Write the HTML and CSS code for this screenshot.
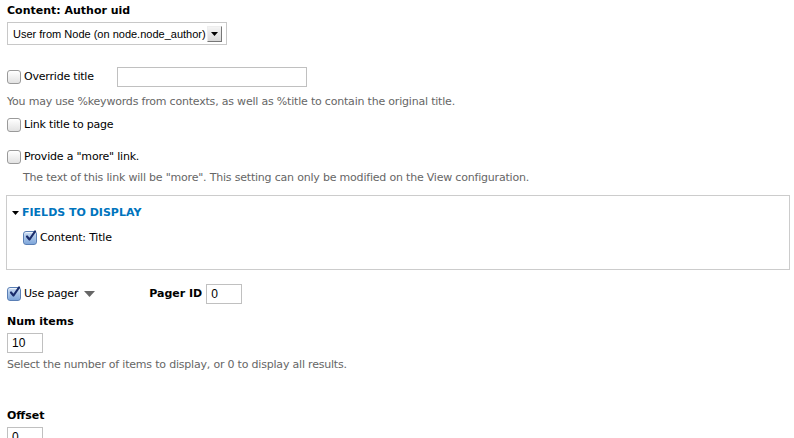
FILE: index.html
```html
<!DOCTYPE html>
<html>
<head>
<meta charset="utf-8">
<link rel="stylesheet" href="styles.css">
</head>
<body>
<div class="page">
  <div class="item item-select">
    <div class="label">Content: Author uid</div>
    <div class="select">
      <span class="select-text">User from Node (on node.node_author)</span>
      <span class="select-btn"><svg width="7" height="4" viewBox="0 0 7 4"><path d="M0 0H7L3.5 4Z" fill="#000"/></svg></span>
    </div>
  </div>

  <div class="item row override">
    <span class="cb"></span><span class="cb-label">Override title</span>
    <span class="text-input wide"></span>
  </div>
  <div class="help help-override">You may use %keywords from contexts, as well as %title to contain the original title.</div>

  <div class="item row link-title">
    <span class="cb"></span><span class="cb-label">Link title to page</span>
  </div>

  <div class="item row more">
    <span class="cb"></span><span class="cb-label">Provide a "more" link.</span>
  </div>
  <div class="help help-more">The text of this link will be "more". This setting can only be modified on the View configuration.</div>

  <div class="fieldset">
    <div class="legend">
      <svg width="7" height="4" viewBox="0 0 7 4"><path d="M0 0H7L3.5 4Z" fill="#000"/></svg>
      <span>FIELDS TO DISPLAY</span>
    </div>
    <div class="row field-title">
      <span class="cb checked"><svg width="13" height="13" viewBox="0 0 13 13"><path d="M3 6.5L5.5 9.5L11 1.5" fill="none" stroke="#1a2c6b" stroke-width="2.2" stroke-linecap="round" stroke-linejoin="round"/></svg></span><span class="cb-label">Content: Title</span>
    </div>
  </div>

  <div class="row pager">
    <span class="cb checked"><svg width="13" height="13" viewBox="0 0 13 13"><path d="M3 6.5L5.5 9.5L11 1.5" fill="none" stroke="#1a2c6b" stroke-width="2.2" stroke-linecap="round" stroke-linejoin="round"/></svg></span><span class="cb-label">Use pager</span>
    <svg class="pager-arrow" width="11" height="6" viewBox="0 0 11 6"><path d="M0 0H11L5.5 6Z" fill="#666"/></svg>
    <span class="label inline">Pager ID</span>
    <span class="text-input small">0</span>
  </div>

  <div class="item num-items">
    <div class="label">Num items</div>
    <span class="text-input small">10</span>
    <div class="help help-num">Select the number of items to display, or 0 to display all results.</div>
  </div>

  <div class="item offset">
    <div class="label">Offset</div>
    <span class="text-input small">0</span>
  </div>
</div>
</body>
</html>
```

FILE: styles.css
```css
html, body {
  margin: 0;
  padding: 0;
  background: #fff;
}
body {
  font-family: "DejaVu Sans", "Lucida Grande", sans-serif;
  font-size: 11px;
  letter-spacing: -0.2px;
  color: #000;
  width: 794px;
  height: 438px;
  overflow: hidden;
}
.page {
  padding: 0 4px 0 7px;
}
.label {
  font-weight: bold;
  font-size: 11px;
  letter-spacing: 0;
  line-height: 16px;
}
.item-select {
  padding-top: 3px;
}
.select {
  margin-top: 3px;
  width: 218px;
  height: 21px;
  border: 1px solid #c8c8c8;
  display: flex;
  align-items: center;
  justify-content: space-between;
  box-sizing: content-box;
  font-family: "Liberation Sans", Arial, sans-serif;
  font-size: 11px;
  letter-spacing: 0;
  white-space: nowrap;
}
.select-text {
  padding-left: 5px;
}
.select-btn {
  width: 13px;
  height: 14px;
  margin-right: 4px;
  border: 1px solid #999;
  border-color: #eee #777 #777 #eee;
  background: linear-gradient(#f4f4f4, #d8d8d8);
  display: flex;
  align-items: center;
  justify-content: center;
  flex: none;
}
.row {
  display: flex;
  align-items: center;
}
.cb {
  width: 12px;
  height: 12px;
  border: 1px solid #9a9a9a;
  border-radius: 3px;
  background: linear-gradient(#fff, #e2e2e2);
  box-shadow: inset 0 1px 1px rgba(255,255,255,0.8);
  flex: none;
  position: relative;
}
.cb.checked {
  background: linear-gradient(#c9dbf2, #7ea6da);
  border-color: #5a7fb5;
}
.cb.checked svg {
  position: absolute;
  left: 0;
  top: -2px;
}
.cb-label {
  margin-left: 3px;
  line-height: 16px;
}
.override {
  margin-top: 22px;
  height: 20px;
}
.override .cb-label {
  width: 93px;
}
.text-input {
  display: inline-flex;
  align-items: center;
  border: 1px solid #c0c0c0;
  box-sizing: border-box;
  height: 20px;
  font-family: "Liberation Sans", Arial, sans-serif;
  font-size: 12px;
  letter-spacing: 0;
  padding-left: 4px;
  background: #fff;
}
.text-input.wide {
  width: 190px;
}
.text-input.small {
  width: 36px;
}
.help {
  color: #666;
  line-height: 16px;
}
.help-override {
  margin-top: 7px;
}
.link-title {
  margin-top: 7px;
}
.more {
  margin-top: 16px;
}
.help-more {
  margin-top: 5px;
  padding-left: 16px;
}
.fieldset {
  margin: 9px 0 0 -1px;
  border: 1px solid #ccc;
  height: 64px;
  padding: 9px 0 0 5px;
  box-sizing: content-box;
}
.legend {
  display: flex;
  align-items: center;
  color: #0074bd;
  font-weight: bold;
  font-size: 11px;
  letter-spacing: 0;
  line-height: 16px;
}
.legend svg {
  margin-right: 3px;
}
.field-title {
  margin-top: 9px;
  padding-left: 11px;
}
.pager {
  margin-top: 13px;
  height: 21px;
}
.pager-arrow {
  margin-left: 6px;
}
.label.inline {
  margin-left: 54px;
  margin-right: 4px;
}
.num-items {
  margin-top: 10px;
}
.num-items .text-input {
  margin-top: 3px;
}
.help-num {
  margin-top: 4px;
}
.offset {
  margin-top: 35px;
}
.offset .text-input {
  margin-top: 3px;
}
```
